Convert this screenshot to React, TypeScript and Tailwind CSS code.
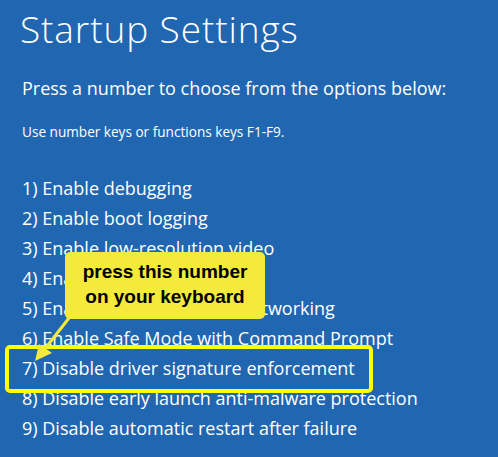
import React from "react";

const items = [
  "1) Enable debugging",
  "2) Enable boot logging",
  "3) Enable low-resolution video",
  "4) Enable Safe Mode",
  "5) Enable Safe Mode with Networking",
  "6) Enable Safe Mode with Command Prompt",
  "7) Disable driver signature enforcement",
  "8) Disable early launch anti-malware protection",
  "9) Disable automatic restart after failure",
];

export default function App() {
  return (
    <div
      className="relative w-[498px] h-[457px] overflow-hidden bg-[#2166b1] text-white"
      style={{ fontFamily: '"Open Sans", "Noto Sans", sans-serif' }}
    >
      <div className="flex flex-col pl-[20px] pt-[10px]">
        <h1 className="text-[37px] leading-[37px] font-light tracking-[0.9px]">Startup Settings</h1>
        <p className="mt-[32px] ml-[2px] text-[18px] leading-[19px] font-normal">
          Press a number to choose from the options below:
        </p>
        <p className="mt-[27px] ml-[2px] text-[13.6px] leading-[13px]">
          Use number keys or functions keys F1-F9.
        </p>
        <ul className="mt-[35px] ml-[2px] flex flex-col">
          {items.map((t) => (
            <li key={t} className="text-[18px] leading-[30px] h-[30px] whitespace-nowrap">
              {t}
            </li>
          ))}
        </ul>
      </div>

      {/* highlight box */}
      <div className="absolute left-[5px] top-[345px] w-[368px] h-[48px] rounded-[5px] border-[4px] border-[#ffff00]" />

      {/* arrow */}
      <svg className="absolute left-[28px] top-[310px]" width="50" height="56" viewBox="0 0 50 56">
        <line x1="41" y1="8" x2="16" y2="40" stroke="#f3ea3b" strokeWidth="3" />
        <polygon points="7,51 11,34 24,43" fill="#f3ea3b" />
      </svg>

      {/* callout */}
      <div
        className="absolute left-[65px] top-[252px] w-[200px] h-[67px] rounded-[5px] bg-[#f3ea3b] text-black flex flex-col items-center pt-[7px] text-[19px] leading-[25px] font-bold"
        style={{ fontFamily: '"Liberation Sans", Arial, sans-serif' }}
      >
        <span>press this number</span>
        <span>on your keyboard</span>
      </div>
    </div>
  );
}
